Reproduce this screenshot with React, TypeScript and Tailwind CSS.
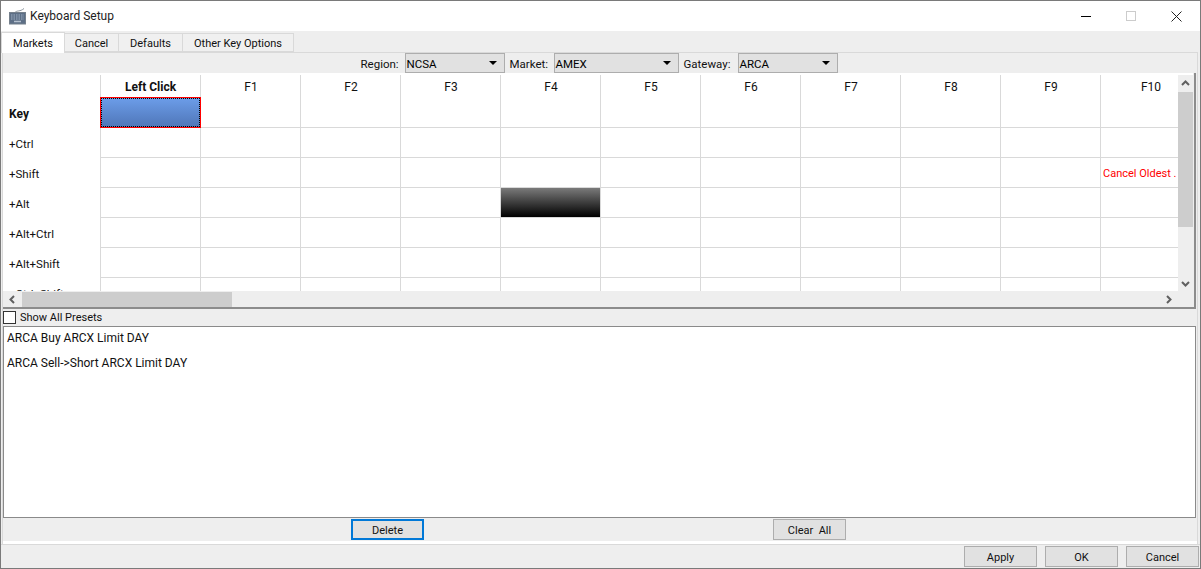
const font = { fontFamily: 'Roboto, "Noto Sans", sans-serif' };

const columns = ["F1", "F2", "F3", "F4", "F5", "F6", "F7", "F8", "F9", "F10"];
const rows = ["+Ctrl", "+Shift", "+Alt", "+Alt+Ctrl", "+Alt+Shift", "+Ctrl+Shift"];

function KeyboardIcon() {
  return (
    <svg width="17" height="17" viewBox="0 0 17 17" className="shrink-0">
      <path d="M6 4.5C8 2 11 4 15 0.5" fill="none" stroke="#8a939c" strokeWidth="1" />
      <rect x="0.5" y="4.5" width="16" height="11.5" fill="#5d6f86" stroke="#75808c" />
      <path d="M2 7h13M2 9h13M2 11h13" stroke="#9fb0c4" strokeWidth="1" strokeDasharray="1.5 1" />
      <path d="M5 13.5h7" stroke="#b4c0ce" strokeWidth="1.5" />
    </svg>
  );
}

function Combo({ value, width }: { value: string; width: string }) {
  return (
    <div className={`${width} h-[20px] flex items-center justify-between pl-[1px] pr-[7px] bg-[#e1e1e1] border border-[#adadad] text-[#000]`}>
      <span className="pt-[3px]">{value}</span>
      <span className="w-0 h-0 border-l-[4px] border-r-[4px] border-t-[4px] border-l-transparent border-r-transparent border-t-black" />
    </div>
  );
}

function Chevron({ d }: { d: string }) {
  return (
    <svg width="9" height="9" viewBox="0 0 9 9">
      <path d={d} fill="none" stroke="#606060" strokeWidth="2" />
    </svg>
  );
}

function Button({ label, focused }: { label: string; focused?: boolean }) {
  return (
    <div
      className={`w-[73px] h-[21px] pt-[3px] flex items-center justify-center bg-[#e1e1e1] text-[11px] whitespace-pre ${
        focused ? "border-2 border-[#0078d7]" : "border border-[#adadad]"
      }`}
    >
      {label}
    </div>
  );
}

export default function App() {
  return (
    <div
      style={font}
      className="w-[1201px] h-[569px] overflow-hidden flex flex-col bg-[#eeeeee] border border-[#7a7a7a] text-[12px] text-[#111]"
    >
      {/* title bar */}
      <div className="h-[30px] shrink-0 bg-white flex items-center pl-[8px]">
        <KeyboardIcon />
        <span className="ml-[4px] text-[#222]">Keyboard Setup</span>
        <div className="ml-auto flex items-center pr-[18px] gap-[35px]">
          <span className="w-[10px] h-px bg-black" />
          <span className="w-[10px] h-[10px] border border-[#cccccc]" />
          <svg width="11" height="11" viewBox="0 0 11 11">
            <path d="M0.5 0.5L10.5 10.5M10.5 0.5L0.5 10.5" stroke="#222" strokeWidth="1" />
          </svg>
        </div>
      </div>

      {/* tabs */}
      <div className="h-[21px] shrink-0 flex items-end relative z-10 text-[11px]">
        <div className="w-[64px] h-[21px] pt-[3px] -mb-px flex items-center justify-center bg-white border border-b-0 border-[#d9d9d9]">
          Markets
        </div>
        <div className="w-[54px] h-[19px] pt-[3px] flex items-center justify-center bg-[#f0f0f0] border border-l-0 border-[#d9d9d9]">
          Cancel
        </div>
        <div className="w-[64px] h-[19px] pt-[3px] flex items-center justify-center bg-[#f0f0f0] border border-l-0 border-[#d9d9d9]">
          Defaults
        </div>
        <div className="w-[111px] h-[19px] pt-[3px] flex items-center justify-center bg-[#f0f0f0] border border-l-0 border-[#d9d9d9]">
          Other Key Options
        </div>
      </div>

      {/* tab pane */}
      <div className="h-[492px] shrink-0 ml-px mr-[2px] flex flex-col border-t border-x border-[#d9d9d9]">
        <div className="h-[20px] shrink-0 flex items-center justify-center pr-[2px] text-[11.5px]">
          <span className="w-[37px] mr-[7px] pt-[3px] whitespace-nowrap">Region:</span>
          <Combo value="NCSA" width="w-[100px]" />
          <span className="w-[37px] ml-[5px] mr-[7px] pt-[3px] whitespace-nowrap">Market:</span>
          <Combo value="AMEX" width="w-[125px]" />
          <span className="w-[47px] ml-[5px] mr-[7px] pt-[3px] whitespace-nowrap">Gateway:</span>
          <Combo value="ARCA" width="w-[100px]" />
        </div>

        {/* key grid */}
        <div className="h-[236px] shrink-0 mr-px pr-px flex flex-col border-r-2 border-b-2 border-[#8c8c8c]">
          <div className="flex-1 min-h-0 flex bg-white">
            <div className="flex-1 min-w-0 overflow-hidden">
              <div className="flex h-[24px] w-max pt-[2px]">
                <div className="w-[98px] border-r border-[#d9d9d9]" />
                <div className="w-[100px] pt-[2px] border-r border-[#d9d9d9] flex items-center justify-center font-bold">
                  Left Click
                </div>
                {columns.map((c) => (
                  <div key={c} className="w-[100px] pl-px pt-[2px] border-r border-[#d9d9d9] flex items-center justify-center">
                    {c}
                  </div>
                ))}
              </div>

              <div className="flex h-[31px] w-max">
                <div className="w-[98px] pl-[6px] pt-[3px] flex items-center font-bold">Key</div>
                <div className="w-[100px] relative border-r border-b border-[#d9d9d9]">
                  <div className="absolute -left-px top-0 w-[101px] h-[31px] border border-[#ff0000] bg-[linear-gradient(to_bottom,#6c9de9,#4f76b8)]">
                    <div className="w-full h-full border border-dotted border-black" />
                  </div>
                </div>
                {columns.map((c) => (
                  <div key={c} className="w-[100px] border-r border-b border-[#d9d9d9]" />
                ))}
              </div>

              {rows.map((r) => (
                <div key={r} className="flex h-[30px] w-max text-[11.5px]">
                  <div className="w-[98px] pl-[6px] pt-[3px] flex items-center border-r border-[#d9d9d9]">{r}</div>
                  <div className="w-[100px] border-r border-b border-[#d9d9d9]" />
                  {columns.map((c) => (
                    <div
                      key={c}
                      className={`w-[100px] border-r border-b border-[#d9d9d9] flex items-center pl-[2px] whitespace-nowrap ${
                        r === "+Shift" && c === "F10" ? "text-[#ff0000] text-[11px] pt-[3px]" : ""
                      }`}
                    >
                      {r === "+Shift" && c === "F10" && "Cancel Oldest ."}
                      {r === "+Alt" && c === "F4" && (
                        <div className="-ml-[2px] w-[99px] h-[29px] bg-[linear-gradient(to_bottom,#7a7a7a,#000000)]" />
                      )}
                    </div>
                  ))}
                </div>
              ))}
            </div>

            {/* vertical scrollbar */}
            <div className="w-[15px] shrink-0 mt-[2px] flex flex-col bg-[#eeeeee]">
              <div className="h-[17px] shrink-0 flex items-center justify-center">
                <Chevron d="M1 6L4.5 2.5L8 6" />
              </div>
              <div className="h-[135px] shrink-0 bg-[#cdcdcd]" />
              <div className="flex-1" />
              <div className="h-[15px] shrink-0 flex items-center justify-center">
                <Chevron d="M1 3L4.5 6.5L8 3" />
              </div>
            </div>
          </div>

          {/* horizontal scrollbar */}
          <div className="h-[16px] shrink-0 flex items-center mr-[15px]">
            <div className="w-[19px] shrink-0 flex items-center justify-center">
              <Chevron d="M6 1L2.5 4.5L6 8" />
            </div>
            <div className="w-[210px] h-[15px] shrink-0 bg-[#cdcdcd]" />
            <div className="flex-1" />
            <div className="w-[15px] shrink-0 flex items-center justify-center mr-[2px]">
              <Chevron d="M3 1L6.5 4.5L3 8" />
            </div>
          </div>
        </div>

        {/* presets */}
        <div className="h-[17px] shrink-0 flex items-center text-[11px]">
          <span className="w-[13px] h-[13px] bg-white border border-[#333333]" />
          <span className="ml-[4px] pt-[2px]">Show All Presets</span>
        </div>
        <div className="h-[192px] shrink-0 mr-px bg-white border border-[#8a8a8a] pl-[3px] pt-[1px]">
          <div className="h-[19px] flex items-center">ARCA Buy ARCX Limit DAY</div>
          <div className="h-[19px] mt-[6px] flex items-center">{"ARCA Sell->Short ARCX Limit DAY"}</div>
        </div>

        <div className="h-[23px] shrink-0 pt-px flex items-start pl-[348px] gap-[349px]">
          <Button label="Delete" focused />
          <Button label="Clear  All" />
        </div>

        <div className="flex-1 bg-white" />
      </div>

      {/* dialog buttons */}
      <div className="flex-1 flex items-center justify-end pr-[1px] gap-[8px] border-t border-[#d9d9d9]">
        <Button label="Apply" />
        <Button label="OK" />
        <Button label="Cancel" />
      </div>
    </div>
  );
}
